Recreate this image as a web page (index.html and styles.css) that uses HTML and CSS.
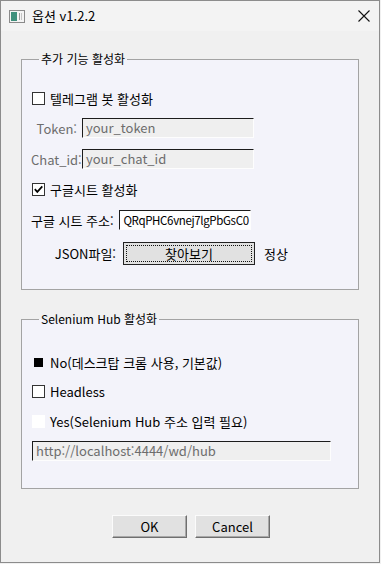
FILE: index.html
```html
<!DOCTYPE html>
<html lang="ko">
<head>
<meta charset="utf-8">
<title>옵션 v1.2.2</title>
<link rel="stylesheet" href="styles.css">
</head>
<body>
<div class="window">
  <div class="titlebar">
    <svg class="app-icon" width="16" height="13" viewBox="0 0 16 13">
      <rect x="0.5" y="0.5" width="15" height="12" fill="#f4f4f4" stroke="#8a8a8a"/>
      <rect x="2" y="2" width="6" height="9" fill="#3f8f7c"/>
      <rect x="10" y="3" width="1" height="7" fill="#9a9a9a"/>
      <rect x="12" y="3" width="1" height="7" fill="#c4c4c4"/>
    </svg>
    <span class="title">옵션 v1.2.2</span>
    <svg class="close" width="12" height="12" viewBox="0 0 12 12">
      <path d="M0.5 0.5 L11.5 11.5 M11.5 0.5 L0.5 11.5" stroke="#111" stroke-width="1.1" fill="none"/>
    </svg>
  </div>
  <div class="content">
    <fieldset class="group group-extra">
      <legend>추가 기능 활성화</legend>
      <div class="row check-row first">
        <span class="cb"></span><span>텔레그램 봇 활성화</span>
      </div>
      <div class="row field-row gap10">
        <span class="lbl short muted">Token:</span>
        <div class="input disabled short-input">your_token</div>
      </div>
      <div class="row field-row gap11">
        <span class="lbl short muted">Chat_id:</span>
        <div class="input disabled short-input">your_chat_id</div>
      </div>
      <div class="row check-row gap10">
        <span class="cb"><svg width="11" height="11" viewBox="0 0 11 11"><path d="M1.8 5.2 L4.3 7.9 L9.3 2.4" stroke="#000" stroke-width="1.7" fill="none"/></svg></span><span>구글시트 활성화</span>
      </div>
      <div class="row field-row gap11">
        <span class="lbl natural">구글 시트 주소:</span>
        <div class="input sheet-input">QRqPHC6vnej7lgPbGsC0</div>
      </div>
      <div class="row field-row gap12 json-row">
        <span class="lbl wide">JSON파일:</span>
        <button class="btn focus-btn" type="button"><span class="focus-ring">찾아보기</span></button>
        <span class="status">정상</span>
      </div>
    </fieldset>

    <fieldset class="group group-hub">
      <legend>Selenium Hub 활성화</legend>
      <div class="row check-row first2">
        <span class="radio-box"><span class="dot"></span></span><span>No(데스크탑 크롬 사용, 기본값)</span>
      </div>
      <div class="row check-row gap9">
        <span class="cb"></span><span>Headless</span>
      </div>
      <div class="row check-row gap10">
        <span class="cb blank"></span><span>Yes(Selenium Hub 주소 입력 필요)</span>
      </div>
      <div class="row field-row gap10">
        <div class="input disabled hub-input">http://localhost:4444/wd/hub</div>
      </div>
    </fieldset>

    <div class="buttons">
      <button class="btn dlg" type="button">OK</button>
      <button class="btn dlg" type="button">Cancel</button>
    </div>
  </div>
</div>
</body>
</html>
```
FILE: styles.css
```css
* { box-sizing: border-box; }

html, body {
  margin: 0;
  padding: 0;
  background: #f0f0f0;
}

body {
  font-family: "Noto Sans CJK KR", "Noto Sans", sans-serif;
  font-size: 13px;
  color: #000;
}

.window {
  width: 380px;
  height: 563px;
  border: 1px solid #8c8c8c;
  background: #f0f0f0;
  display: flex;
  flex-direction: column;
}

.titlebar {
  height: 30px;
  background: #f3f3f3;
  display: flex;
  align-items: center;
  padding-left: 8px;
  padding-right: 9px;
}

.app-icon { flex: none; }

.title {
  margin-left: 7px;
  font-size: 13px;
  flex: 1;
  line-height: 16px;
}

.close { flex: none; }

.content {
  padding: 20px 20px 0 20px;
  display: flex;
  flex-direction: column;
}

.group {
  margin: 0;
  padding: 0 0 0 10px;
  border: 1px solid #a3a3a3;
  background: #f3f3fa;
  min-width: 0;
}

.group legend {
  margin-left: 7px;
  padding: 0 2px;
  font-size: 12px;
  line-height: 16px;
}

.group-extra { padding-bottom: 24px; }
.group-hub { margin-top: 21px; padding-bottom: 27px; }

.row {
  display: flex;
  align-items: center;
  height: 20px;
  white-space: nowrap;
}

.first { margin-top: 21px; }
.first2 { margin-top: 25px; }
.gap9 { margin-top: 9px; }
.gap10 { margin-top: 10px; }
.gap11 { margin-top: 11px; }
.gap12 { margin-top: 12px; }

.check-row { gap: 5px; }

.cb {
  width: 13px;
  height: 13px;
  border: 1px solid #333;
  background: #fff;
  display: flex;
  align-items: center;
  justify-content: center;
  flex: none;
}

.cb.blank { border-color: #fff; }

.radio-box {
  width: 13px;
  height: 13px;
  display: flex;
  align-items: center;
  justify-content: center;
  flex: none;
}

.dot {
  width: 9px;
  height: 9px;
  background: #000;
}

.field-row { margin-left: -1px; }

.lbl {
  flex: none;
  text-align: right;
  margin-right: 5px;
}

.lbl.short { width: 46px; }
.lbl.wide { width: 85px; }
.lbl.natural { margin-right: 5px; text-align: left; }

.muted { color: #6d6d6d; }

.input {
  height: 20px;
  border-style: solid;
  border-width: 1px;
  border-color: #1c1c1c #fdfdfd #fdfdfd #1c1c1c;
  padding: 0 3px;
  line-height: 18px;
  overflow: hidden;
  white-space: nowrap;
  flex: none;
}

.input.disabled {
  background: #efefef;
  color: #6d6d6d;
}

.short-input { width: 172px; }

.sheet-input {
  width: 132px;
  background: #fff;
  padding: 0 1px 0 1px;
  font-size: 11.5px;
  letter-spacing: -0.35px;
  text-align: right;
}

.hub-input {
  width: 299px;
  margin-left: 1px;
}

.json-row { height: 23px; }

.btn {
  font-family: inherit;
  font-size: 13px;
  color: #000;
  background: #e1e1e1;
  margin: 0;
  cursor: default;
}

.focus-btn {
  width: 132px;
  height: 23px;
  margin-left: 2px;
  border: 1px solid #222;
  padding: 2px;
  display: flex;
}

.focus-ring {
  flex: 1;
  border: 1px dotted #111;
  display: flex;
  align-items: center;
  justify-content: center;
  line-height: 15px;
}

.status { margin-left: 9px; }

.buttons {
  display: flex;
  justify-content: center;
  gap: 8px;
  margin-top: 26px;
  padding-left: 2px;
}

.dlg {
  width: 75px;
  height: 23px;
  border-style: solid;
  border-width: 1px;
  border-color: #fbfbfb #6f6f6f #6f6f6f #fbfbfb;
  box-shadow: inset -1px -1px 0 #a8a8a8;
  padding: 0;
  line-height: 20px;
}
```
